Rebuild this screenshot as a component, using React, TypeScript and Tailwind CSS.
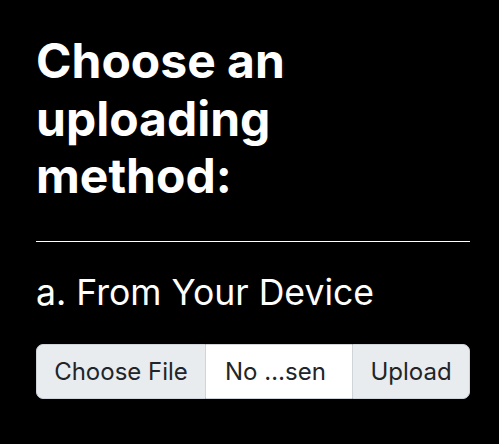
export default function App() {
  return (
    <div className="min-h-[444px] bg-black pl-[36px] pr-[29px] pt-[32px] font-['Inter','Liberation_Sans',sans-serif] text-white">
      <h1 className="text-[48px] font-bold leading-[1.2]">
        Choose an uploading method:
      </h1>
      <hr className="mt-[36px] border-t border-white" />
      <h3 className="mt-[30px] text-[35.6px] font-normal leading-[1.2]">
        a. From Your Device
      </h3>
      <div className="mt-[30px] flex h-[55px] text-[24px] text-[#212529]">
        <div className="flex w-[170px] items-center justify-center rounded-l-[7px] border border-[#ced4da] bg-[#e9ecef]">
          Choose File
        </div>
        <div className="flex w-[146px] items-center border-y border-[#ced4da] bg-white pl-[19px]">
          No …sen
        </div>
        <button className="flex flex-1 items-center justify-center rounded-r-[7px] border border-[#ced4da] bg-[#e9ecef]">
          Upload
        </button>
      </div>
    </div>
  );
}
